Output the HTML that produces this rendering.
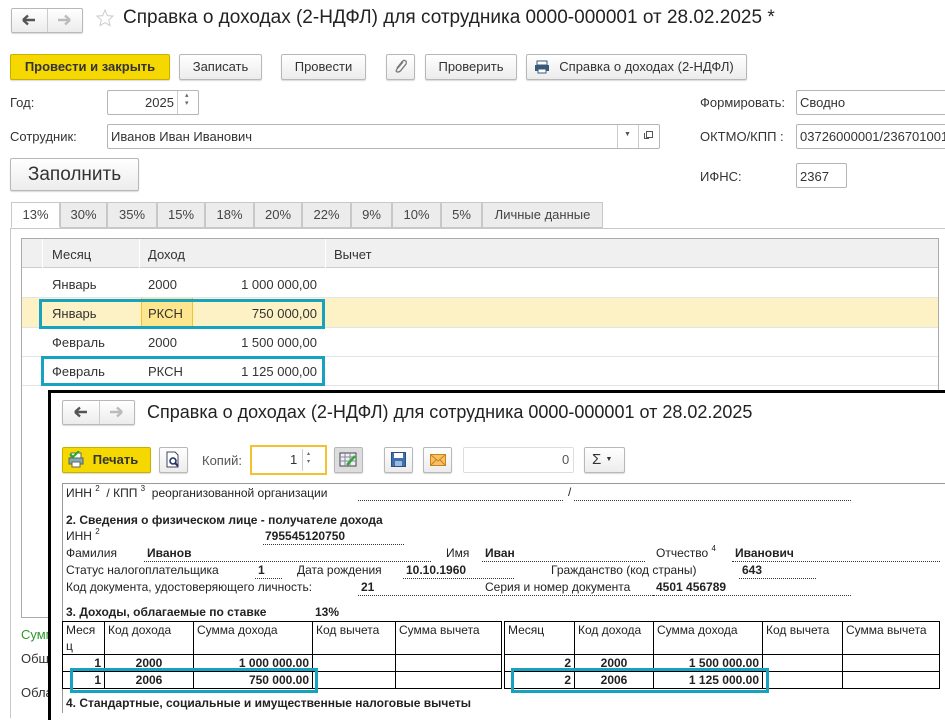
<!DOCTYPE html>
<html><head><meta charset="utf-8"><style>
*{box-sizing:border-box;margin:0;padding:0}
body{width:945px;height:712px;overflow:hidden;background:#fff;font-family:"Liberation Sans",Arial,sans-serif;font-size:13px;color:#333;position:relative}
.a{position:absolute;white-space:nowrap}
.btn{position:absolute;border:1px solid #b8b8b8;border-radius:2px;background:linear-gradient(#fff,#ececec);box-shadow:0 1px 1px rgba(0,0,0,.15);text-align:center;color:#333}
.inp{position:absolute;border:1px solid #b5b5b5;border-radius:2px;background:#fff}
.tab{position:absolute;top:202px;height:26px;border:1px solid #c8c8c8;background:#ececec;text-align:center;line-height:24px;color:#444}
.r{font-size:12px;color:#222}
.b{font-weight:bold}
.dot{position:absolute;border-bottom:1px dotted #333;height:1px}
table.t{position:absolute;border-collapse:collapse;font-size:12px;color:#222}
table.t td{border:1px solid #000;vertical-align:top;padding:0 3px;height:17px;line-height:16px}
.teal{position:absolute;border:3px solid #17a2c0}
sup{font-size:8px;vertical-align:6px;line-height:0}
</style></head><body>
<!-- top nav -->
<div class="btn" style="left:11px;top:8px;width:72px;height:25px"></div>
<div class="a" style="left:47px;top:9px;width:1px;height:23px;background:#ccc"></div>
<svg class="a" style="left:22px;top:14px" width="14" height="12"><path d="M1 6H13M1 6L6 1.5M1 6L6 10.5" stroke="#555" stroke-width="2.4" fill="none"/></svg>
<svg class="a" style="left:57px;top:14px" width="14" height="12"><path d="M1 6H13M13 6L8 1.5M13 6L8 10.5" stroke="#bbb" stroke-width="2.4" fill="none"/></svg>
<svg class="a" style="left:96px;top:9px" width="18" height="18"><path d="M9 1L11.3 6.6 17 7.1 12.7 10.9 14 16.6 9 13.6 4 16.6 5.3 10.9 1 7.1 6.7 6.6Z" fill="none" stroke="#ccc"/></svg>
<div class="a" style="left:123px;top:7px;font-size:19px;color:#222">Справка о доходах (2-НДФЛ) для сотрудника 0000-000001 от 28.02.2025 *</div>
<!-- buttons -->
<div class="btn" style="left:10px;top:54px;width:160px;height:26px;background:#f5d800;border-color:#c9b000;font-weight:bold;line-height:24px">Провести и закрыть</div>
<div class="btn" style="left:179px;top:54px;width:83px;height:26px;line-height:24px">Записать</div>
<div class="btn" style="left:281px;top:54px;width:85px;height:26px;line-height:24px">Провести</div>
<div class="btn" style="left:386px;top:54px;width:29px;height:26px"></div>
<svg class="a" style="left:393px;top:59px" width="15" height="16"><path d="M10 3L4 10Q2 13 5 13Q7 13 9 10L13 5Q14 2 12 1.5Q10 1 8 4L4 9" fill="none" stroke="#777" stroke-width="1.3"/></svg>
<div class="btn" style="left:425px;top:54px;width:92px;height:26px;line-height:24px">Проверить</div>
<div class="btn" style="left:526px;top:54px;width:221px;height:26px;line-height:24px;padding-left:20px">Справка о доходах (2-НДФЛ)</div>
<svg class="a" style="left:534px;top:60px" width="16" height="14"><rect x="3" y="1" width="10" height="4" fill="#fff" stroke="#3a5a7a"/><rect x="1" y="5" width="14" height="6" fill="#3a5a7a"/><rect x="4" y="9" width="8" height="4" fill="#fff" stroke="#3a5a7a"/></svg>
<!-- fields -->
<div class="a" style="left:10px;top:95px">Год:</div>
<div class="inp" style="left:107px;top:90px;width:92px;height:25px"></div>
<div class="a" style="left:145px;top:95px">2025</div>
<div class="a" style="left:177px;top:91px;width:1px;height:23px;background:#ccc"></div>
<div class="a" style="left:185px;top:91px;font-size:7px;color:#666">▴<br>▾</div>
<div class="a" style="left:10px;top:129px">Сотрудник:</div>
<div class="inp" style="left:107px;top:124px;width:553px;height:25px"></div>
<div class="a" style="left:111px;top:129px">Иванов Иван Иванович</div>
<div class="a" style="left:617px;top:125px;width:1px;height:23px;background:#ccc"></div>
<div class="a" style="left:638px;top:125px;width:1px;height:23px;background:#ccc"></div>
<div class="a" style="left:624px;top:131px;font-size:7px;color:#555">▼</div>
<div class="a" style="left:646px;top:131px;width:7px;height:7px;border:1px solid #555"></div>
<div class="a" style="left:644px;top:133px;width:5px;height:6px;border-left:1px solid #555;border-bottom:1px solid #555"></div>
<div class="btn" style="left:10px;top:158px;width:129px;height:33px;font-size:19px;line-height:31px">Заполнить</div>
<div class="a" style="left:700px;top:95px">Формировать:</div>
<div class="inp" style="left:796px;top:90px;width:160px;height:25px"></div>
<div class="a" style="left:800px;top:95px">Сводно</div>
<div class="a" style="left:700px;top:129px">ОКТМО/КПП :</div>
<div class="inp" style="left:796px;top:124px;width:160px;height:25px"></div>
<div class="a" style="left:800px;top:129px">03726000001/236701001</div>
<div class="a" style="left:700px;top:169px">ИФНС:</div>
<div class="inp" style="left:796px;top:163px;width:51px;height:25px"></div>
<div class="a" style="left:800px;top:169px">2367</div>
<!-- tabs -->
<div class="a" style="left:10px;top:228px;width:935px;height:1px;background:#c8c8c8"></div>
<div class="tab" style="left:11px;width:49px;background:#fff;border-bottom-color:#fff">13%</div>
<div class="tab" style="left:60px;width:47px">30%</div>
<div class="tab" style="left:107px;width:50px">35%</div>
<div class="tab" style="left:157px;width:48px">15%</div>
<div class="tab" style="left:205px;width:49px">18%</div>
<div class="tab" style="left:254px;width:48px">20%</div>
<div class="tab" style="left:302px;width:49px">22%</div>
<div class="tab" style="left:351px;width:41px">9%</div>
<div class="tab" style="left:392px;width:49px">10%</div>
<div class="tab" style="left:441px;width:41px">5%</div>
<div class="tab" style="left:482px;width:121px">Личные данные</div>
<div class="a" style="left:10px;top:228px;width:1px;height:490px;background:#c8c8c8"></div>
<!-- grid -->
<div class="a" style="left:21px;top:238px;width:918px;height:380px;border:1px solid #aaa"></div>
<div class="a" style="left:22px;top:239px;width:916px;height:29px;background:#f0f0f0;border-bottom:1px solid #ccc"></div>
<div class="a" style="left:42px;top:239px;width:1px;height:29px;background:#fff"></div>
<div class="a" style="left:139px;top:239px;width:1px;height:29px;background:#fff"></div>
<div class="a" style="left:325px;top:239px;width:1px;height:29px;background:#fff"></div>
<div class="a" style="left:52px;top:247px">Месяц</div>
<div class="a" style="left:148px;top:247px">Доход</div>
<div class="a" style="left:334px;top:247px">Вычет</div>
<div class="a" style="left:22px;top:298px;width:916px;height:29px;background:#fdf1c6"></div>
<div class="a" style="left:141px;top:298px;width:52px;height:29px;background:#fde68e;border-left:1px solid #f2c230;border-right:1px solid #f2c230"></div>
<div class="a" style="left:22px;top:297px;width:916px;height:1px;background:#e4e4e4"></div>
<div class="a" style="left:22px;top:327px;width:916px;height:1px;background:#e4e4e4"></div>
<div class="a" style="left:22px;top:356px;width:916px;height:1px;background:#e4e4e4"></div>
<div class="a" style="left:22px;top:385px;width:916px;height:1px;background:#e4e4e4"></div>
<div class="a" style="left:52px;top:277px">Январь</div><div class="a" style="left:148px;top:277px">2000</div><div class="a" style="left:217px;top:277px;width:100px;text-align:right">1 000 000,00</div>
<div class="a" style="left:52px;top:306px">Январь</div><div class="a" style="left:148px;top:306px">РКСН</div><div class="a" style="left:217px;top:306px;width:100px;text-align:right">750 000,00</div>
<div class="a" style="left:52px;top:335px">Февраль</div><div class="a" style="left:148px;top:335px">2000</div><div class="a" style="left:217px;top:335px;width:100px;text-align:right">1 500 000,00</div>
<div class="a" style="left:52px;top:364px">Февраль</div><div class="a" style="left:148px;top:364px">РКСН</div><div class="a" style="left:217px;top:364px;width:100px;text-align:right">1 125 000,00</div>
<div class="teal" style="left:39px;top:299px;width:286px;height:30px"></div>
<div class="teal" style="left:41px;top:356px;width:284px;height:30px"></div>
<div class="a" style="left:21px;top:627px;color:#2a9a2a">Сумм</div>
<div class="a" style="left:21px;top:651px">Общ</div>
<div class="a" style="left:21px;top:685px">Обла</div>
<!-- overlay window -->
<div class="a" style="left:48px;top:390px;width:900px;height:330px;background:#fff;border-top:3px solid #000;border-left:3px solid #000"></div>
<div class="btn" style="left:62px;top:400px;width:73px;height:25px"></div>
<div class="a" style="left:99px;top:401px;width:1px;height:23px;background:#ccc"></div>
<svg class="a" style="left:74px;top:406px" width="14" height="12"><path d="M1 6H13M1 6L6 1.5M1 6L6 10.5" stroke="#555" stroke-width="2.4" fill="none"/></svg>
<svg class="a" style="left:109px;top:406px" width="14" height="12"><path d="M1 6H13M13 6L8 1.5M13 6L8 10.5" stroke="#bbb" stroke-width="2.4" fill="none"/></svg>
<div class="a" style="left:147px;top:402px;font-size:18px;color:#222">Справка о доходах (2-НДФЛ) для сотрудника 0000-000001 от 28.02.2025</div>
<div class="btn" style="left:62px;top:447px;width:89px;height:26px;background:#f5d800;border-color:#c9b000;font-weight:bold;font-size:13px;line-height:24px;padding-left:18px">Печать</div>
<svg class="a" style="left:68px;top:451px" width="16" height="18"><rect x="3" y="2" width="10" height="5" fill="#fff" stroke="#666"/><rect x="1" y="7" width="14" height="6" fill="#8aa" stroke="#566"/><rect x="4" y="11" width="8" height="5" fill="#fff" stroke="#666"/><path d="M2 3L5 6 11 0" stroke="#2a2" stroke-width="2" fill="none"/></svg>
<div class="btn" style="left:159px;top:447px;width:29px;height:26px"></div>
<svg class="a" style="left:166px;top:451px" width="15" height="17"><path d="M1 1H9L12 4V16H1Z" fill="#fff" stroke="#445"/><circle cx="7" cy="10" r="3" fill="none" stroke="#236" stroke-width="1.6"/><path d="M9 12L12 15" stroke="#236" stroke-width="2"/></svg>
<div class="a" style="left:202px;top:453px;color:#555">Копий:</div>
<div class="a" style="left:250px;top:445px;width:77px;height:30px;border:2px solid #f2c230;background:#fff"></div>
<div class="a" style="left:290px;top:452px">1</div>
<div class="a" style="left:302px;top:449px;width:1px;height:22px;background:#ccc"></div>
<div class="a" style="left:307px;top:450px;font-size:6px;color:#666;line-height:8px">▴<br>▾</div>
<div class="btn" style="left:334px;top:447px;width:29px;height:26px;background:#ddd"></div>
<svg class="a" style="left:339px;top:452px" width="19" height="16"><rect x="1" y="1" width="16" height="13" fill="#eef" stroke="#444"/><path d="M1 5H17M1 9H17M6 1V14M11 1V14" stroke="#888"/><path d="M8 13L16 4" stroke="#3a3" stroke-width="2.5"/></svg>
<div class="btn" style="left:384px;top:447px;width:29px;height:26px"></div>
<svg class="a" style="left:391px;top:452px" width="15" height="15"><rect x="0.5" y="0.5" width="14" height="14" fill="#3f6fb0" stroke="#2a4f80"/><rect x="3" y="1" width="9" height="5" fill="#fff"/><rect x="4" y="9" width="7" height="5" fill="#9bd"/></svg>
<div class="btn" style="left:423px;top:447px;width:29px;height:26px"></div>
<svg class="a" style="left:430px;top:454px" width="16" height="12"><rect x="0.5" y="0.5" width="15" height="11" fill="#f8c060" stroke="#c88020"/><path d="M1 1L8 7 15 1M1 11L6 6M15 11L10 6" stroke="#c88020" fill="none"/></svg>
<div class="inp" style="left:463px;top:447px;width:111px;height:26px;border-color:#ddd"></div>
<div class="a" style="left:562px;top:452px;color:#555">0</div>
<div class="btn" style="left:584px;top:447px;width:41px;height:26px;line-height:24px;font-size:15px;text-align:left;padding-left:7px">Σ <span style="font-size:7px;vertical-align:middle">▼</span></div>
<!-- report -->
<div class="a" style="left:62px;top:483px;width:883px;height:1px;background:#999"></div>
<div class="a" style="left:62px;top:483px;width:1px;height:230px;background:#999"></div>
<div class="a r" style="left:66px;top:486px">ИНН <sup>2</sup> &nbsp;/ КПП <sup>3</sup> &nbsp;реорганизованной организации</div>
<div class="dot" style="left:358px;top:500px;width:205px"></div>
<div class="a r" style="left:568px;top:485px">/</div>
<div class="dot" style="left:574px;top:500px;width:277px"></div>
<div class="a r b" style="left:66px;top:513px">2. Сведения о физическом лице - получателе дохода</div>
<div class="a r" style="left:66px;top:529px">ИНН <sup>2</sup></div>
<div class="a r b" style="left:265px;top:529px">795545120750</div>
<div class="dot" style="left:263px;top:544px;width:141px"></div>
<div class="a r" style="left:66px;top:546px">Фамилия</div>
<div class="a r b" style="left:147px;top:546px">Иванов</div>
<div class="dot" style="left:144px;top:561px;width:287px"></div>
<div class="a r" style="left:446px;top:546px">Имя</div>
<div class="a r b" style="left:485px;top:546px">Иван</div>
<div class="dot" style="left:482px;top:561px;width:163px"></div>
<div class="a r" style="left:656px;top:546px">Отчество <sup>4</sup></div>
<div class="a r b" style="left:735px;top:546px">Иванович</div>
<div class="dot" style="left:732px;top:561px;width:208px"></div>
<div class="a r" style="left:66px;top:563px">Статус налогоплательщика</div>
<div class="a r b" style="left:258px;top:563px">1</div>
<div class="dot" style="left:255px;top:578px;width:27px"></div>
<div class="a r" style="left:297px;top:563px">Дата рождения</div>
<div class="a r b" style="left:406px;top:563px">10.10.1960</div>
<div class="dot" style="left:403px;top:578px;width:111px"></div>
<div class="a r" style="left:551px;top:563px">Гражданство (код страны)</div>
<div class="a r b" style="left:742px;top:563px">643</div>
<div class="dot" style="left:739px;top:578px;width:77px"></div>
<div class="a r" style="left:66px;top:580px">Код документа, удостоверяющего личность:</div>
<div class="a r b" style="left:361px;top:580px">21</div>
<div class="dot" style="left:358px;top:595px;width:301px"></div>
<div class="a r" style="left:485px;top:580px">Серия и номер документа</div>
<div class="a r b" style="left:656px;top:580px">4501 456789</div>
<div class="dot" style="left:653px;top:595px;width:198px"></div>
<div class="a r b" style="left:66px;top:605px">3. Доходы, облагаемые по ставке</div>
<div class="a r b" style="left:315px;top:605px">13%</div>
<table class="t" style="left:62px;top:621px;width:440px">
<tr><td style="width:42px;height:33px;line-height:16px">Меся<br>ц</td><td style="width:89px">Код дохода</td><td style="width:119px">Сумма дохода</td><td style="width:83px">Код вычета</td><td>Сумма вычета</td></tr>
<tr><td class="b" style="text-align:right">1</td><td class="b" style="text-align:center">2000</td><td class="b" style="text-align:right">1 000 000.00</td><td></td><td></td></tr>
<tr><td class="b" style="text-align:right">1</td><td class="b" style="text-align:center">2006</td><td class="b" style="text-align:right">750 000.00</td><td></td><td></td></tr>
</table>
<table class="t" style="left:504px;top:621px;width:436px">
<tr><td style="width:70px;height:33px">Месяц</td><td style="width:79px">Код дохода</td><td style="width:109px">Сумма дохода</td><td style="width:80px">Код вычета</td><td>Сумма вычета</td></tr>
<tr><td class="b" style="text-align:right">2</td><td class="b" style="text-align:center">2000</td><td class="b" style="text-align:right">1 500 000.00</td><td></td><td></td></tr>
<tr><td class="b" style="text-align:right">2</td><td class="b" style="text-align:center">2006</td><td class="b" style="text-align:right">1 125 000.00</td><td></td><td></td></tr>
</table>
<div class="teal" style="left:70px;top:668px;width:248px;height:25px"></div>
<div class="teal" style="left:511px;top:668px;width:258px;height:25px"></div>
<div class="a r b" style="left:66px;top:696px">4. Стандартные, социальные и имущественные налоговые вычеты</div>
</body></html>
